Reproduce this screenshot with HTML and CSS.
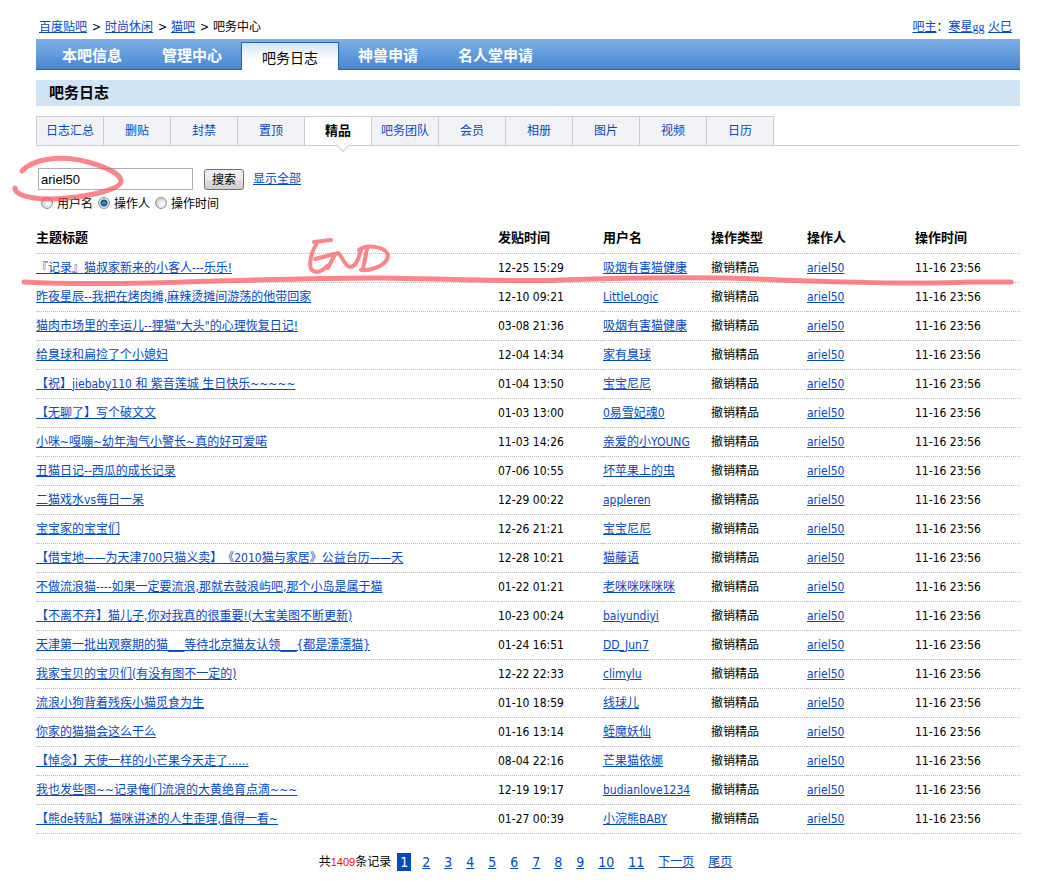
FILE: index.html
```html
<!DOCTYPE html>
<html lang="zh-CN">
  <head>
    <meta charset="UTF-8">
    <title>吧务中心_猫吧</title>
    <link rel="stylesheet" href="styles.css">
  </head>
  <body>
    <div class="top">
      <div class="crumbs">
        <a href="#">百度贴吧</a><span class="sep">&gt;</span><a href="#">时尚休闲</a><span class="sep">&gt;</span><a href="#">猫吧</a><span class="sep">&gt;</span><span>吧务中心</span>
      </div>
      <div class="owner"><a href="#">吧主</a>：<a href="#">寒星<span class="serif">gg</span></a> <a href="#">火巳</a></div>
    </div>

    <div class="nav">
      <a href="#">本吧信息</a>
      <a href="#">管理中心</a>
      <a href="#" class="on">吧务日志</a>
      <a href="#">神兽申请</a>
      <a href="#">名人堂申请</a>
    </div>

    <h1>吧务日志</h1>

    <div class="tabs">
      <a href="#">日志汇总</a>
      <a href="#">删贴</a>
      <a href="#">封禁</a>
      <a href="#">置顶</a>
      <a href="#" class="on">精品</a>
      <a href="#">吧务团队</a>
      <a href="#">会员</a>
      <a href="#">相册</a>
      <a href="#">图片</a>
      <a href="#">视频</a>
      <a href="#">日历</a>
    </div>

    <form class="search">
      <div class="line">
        <input type="text" class="word" value="ariel50" aria-label="搜索">
        <button type="button" class="btn">搜索</button>
        <a href="#">显示全部</a>
      </div>
      <div class="types">
        <input type="radio" name="type" id="t1"><label for="t1">用户名</label>
        <input type="radio" name="type" id="t2" checked><label for="t2">操作人</label>
        <input type="radio" name="type" id="t3"><label for="t3">操作时间</label>
      </div>
    </form>

    <table class="log">
      <colgroup>
        <col class="c-title"><col class="c-date"><col class="c-user"><col class="c-type"><col class="c-oper"><col class="c-time">
      </colgroup>
      <thead>
        <tr><th>主题标题</th><th>发贴时间</th><th>用户名</th><th>操作类型</th><th>操作人</th><th>操作时间</th></tr>
      </thead>
      <tbody>
        <tr><td><a href="#">『记录』猫叔家新来的小客人---乐乐!</a></td><td>12-25 15:29</td><td><a href="#">吸烟有害猫健康</a></td><td>撤销精品</td><td><a href="#">ariel50</a></td><td>11-16 23:56</td></tr>
        <tr><td><a href="#">昨夜星辰--我把在烤肉摊,麻辣烫摊间游荡的他带回家</a></td><td>12-10 09:21</td><td><a href="#">LittleLogic</a></td><td>撤销精品</td><td><a href="#">ariel50</a></td><td>11-16 23:56</td></tr>
        <tr><td><a href="#">猫肉市场里的幸运儿--狸猫"大头"的心理恢复日记!</a></td><td>03-08 21:36</td><td><a href="#">吸烟有害猫健康</a></td><td>撤销精品</td><td><a href="#">ariel50</a></td><td>11-16 23:56</td></tr>
        <tr><td><a href="#">给臭球和扁捡了个小媳妇</a></td><td>12-04 14:34</td><td><a href="#">家有臭球</a></td><td>撤销精品</td><td><a href="#">ariel50</a></td><td>11-16 23:56</td></tr>
        <tr><td><a href="#">【祝】jiebaby110 和 紫音莲城 生日快乐~~~~~</a></td><td>01-04 13:50</td><td><a href="#">宝宝尼尼</a></td><td>撤销精品</td><td><a href="#">ariel50</a></td><td>11-16 23:56</td></tr>
        <tr><td><a href="#">【无聊了】写个破文文</a></td><td>01-03 13:00</td><td><a href="#">0易雪妃魂0</a></td><td>撤销精品</td><td><a href="#">ariel50</a></td><td>11-16 23:56</td></tr>
        <tr><td><a href="#">小咪~嘎嘣~幼年淘气小警长~真的好可爱喏</a></td><td>11-03 14:26</td><td><a href="#">亲爱的小YOUNG</a></td><td>撤销精品</td><td><a href="#">ariel50</a></td><td>11-16 23:56</td></tr>
        <tr><td><a href="#">丑猫日记--西瓜的成长记录</a></td><td>07-06 10:55</td><td><a href="#">坏苹果上的虫</a></td><td>撤销精品</td><td><a href="#">ariel50</a></td><td>11-16 23:56</td></tr>
        <tr><td><a href="#">二猫戏水vs每日一呆</a></td><td>12-29 00:22</td><td><a href="#">appleren</a></td><td>撤销精品</td><td><a href="#">ariel50</a></td><td>11-16 23:56</td></tr>
        <tr><td><a href="#">宝宝家的宝宝们</a></td><td>12-26 21:21</td><td><a href="#">宝宝尼尼</a></td><td>撤销精品</td><td><a href="#">ariel50</a></td><td>11-16 23:56</td></tr>
        <tr><td><a href="#">【借宝地——为天津700只猫义卖】《2010猫与家居》公益台历——天</a></td><td>12-28 10:21</td><td><a href="#">猫藤语</a></td><td>撤销精品</td><td><a href="#">ariel50</a></td><td>11-16 23:56</td></tr>
        <tr><td><a href="#">不做流浪猫----如果一定要流浪,那就去鼓浪屿吧,那个小岛是属于猫</a></td><td>01-22 01:21</td><td><a href="#">老咪咪咪咪咪</a></td><td>撤销精品</td><td><a href="#">ariel50</a></td><td>11-16 23:56</td></tr>
        <tr><td><a href="#">【不离不弃】猫儿子,你对我真的很重要!(大宝美图不断更新)</a></td><td>10-23 00:24</td><td><a href="#">baiyundiyi</a></td><td>撤销精品</td><td><a href="#">ariel50</a></td><td>11-16 23:56</td></tr>
        <tr><td><a href="#">天津第一批出观察期的猫___等待北京猫友认领___{都是漂漂猫}</a></td><td>01-24 16:51</td><td><a href="#">DD_Jun7</a></td><td>撤销精品</td><td><a href="#">ariel50</a></td><td>11-16 23:56</td></tr>
        <tr><td><a href="#">我家宝贝的宝贝们(有没有图不一定的)</a></td><td>12-22 22:33</td><td><a href="#">climylu</a></td><td>撤销精品</td><td><a href="#">ariel50</a></td><td>11-16 23:56</td></tr>
        <tr><td><a href="#">流浪小狗背着残疾小猫觅食为生</a></td><td>01-10 18:59</td><td><a href="#">线球儿</a></td><td>撤销精品</td><td><a href="#">ariel50</a></td><td>11-16 23:56</td></tr>
        <tr><td><a href="#">你家的猫猫会这么干么</a></td><td>01-16 13:14</td><td><a href="#">蛭魔妖仙</a></td><td>撤销精品</td><td><a href="#">ariel50</a></td><td>11-16 23:56</td></tr>
        <tr><td><a href="#">【悼念】天使一样的小芒果今天走了......</a></td><td>08-04 22:16</td><td><a href="#">芒果猫依娜</a></td><td>撤销精品</td><td><a href="#">ariel50</a></td><td>11-16 23:56</td></tr>
        <tr><td><a href="#">我也发些图~~记录俺们流浪的大黄绝育点滴~~~</a></td><td>12-19 19:17</td><td><a href="#">budianlove1234</a></td><td>撤销精品</td><td><a href="#">ariel50</a></td><td>11-16 23:56</td></tr>
        <tr><td><a href="#">【熊de转贴】猫咪讲述的人生歪理,值得一看~</a></td><td>01-27 00:39</td><td><a href="#">小浣熊BABY</a></td><td>撤销精品</td><td><a href="#">ariel50</a></td><td>11-16 23:56</td></tr>
      </tbody>
    </table>

    <div class="pager">
      <span class="total">共<em>1409</em>条记录</span>
      <span class="cur">1</span>
      <a href="#">2</a>
      <a href="#">3</a>
      <a href="#">4</a>
      <a href="#">5</a>
      <a href="#">6</a>
      <a href="#">7</a>
      <a href="#">8</a>
      <a href="#">9</a>
      <a href="#">10</a>
      <a href="#">11</a>
      <a href="#" class="zh">下一页</a>
      <a href="#" class="zh">尾页</a>
    </div>

    <!-- red pen marks -->
    <svg class="marks" width="1040" height="300" viewBox="0 0 1040 300">
      <path d="M22 171C34 158 62 155 88 162C106 167 121 174 121 181C121 189 92 196 66 198C42 201 15 197 15 188"/>
      <path d="M24 282C60 284 100 284 150 283C220 281 300 278 380 278C450 279 530 282 560 280C620 278 700 276 780 280C850 283 930 284 970 282L1011 282"/>
      <path class="pen" d="M314 242L331 240M317 243C311 252 308 266 312 270C316 274 323 271 327 266M315 259L334 254M328 268C331 263 334 253 338 253C342 255 344 266 350 267C357 267 359 256 361 250M367 249L363 269M359 250C366 244 385 246 388 255C388 265 372 271 361 270"/>
    </svg>
  </body>
</html>
```
FILE: styles.css
```css
*{
  box-sizing: border-box;
}
body{
  position: relative;
  margin: 0;
  padding: 20px 20px 12px 36px;
  background: #fff;
  color: #000;
  font: 12px/14px "DejaVu Sans Condensed", "Noto Sans CJK SC", sans-serif;
  text-spacing-trim: space-all;
}
a{
  color: #0449be;
}

.top{
  display: flex;
  justify-content: space-between;
  padding: 0 8px 0 3px;
  margin-bottom: 5px;
}
.crumbs{
  display: flex;
  gap: 5px;
}
.sep{
  width: 8px;
  text-align: center;
}
.serif{
  font-family: "Liberation Serif", serif;
}

/* main nav */
.nav{
  display: flex;
  align-items: flex-end;
  height: 31px;
  padding-left: 6px;
  background: linear-gradient(#7fb0e7, #4788d0);
  border-bottom: 1px solid #2c62a2;
}
.nav a{
  padding: 0 20px;
  color: #fff;
  font-size: 15px;
  font-weight: bold;
  line-height: 26px;
  text-decoration: none;
}
.nav .on{
  height: 28px;
  margin: 0 -1px -1px;
  border: 1px solid #2c62a2;
  border-bottom: 0;
  background: linear-gradient(#d3e4f6, #fff 60%);
  color: #000;
  font-size: 14px;
  font-weight: normal;
  line-height: 30px;
}

h1{
  margin: 10px 0;
  padding-left: 13px;
  background: #d1e4f3;
  font-size: 15px;
  line-height: 26px;
}

/* sub tabs */
.tabs{
  display: flex;
  height: 30px;
  border-bottom: 1px solid #ccc;
}
.tabs a{
  position: relative;
  width: 67px;
  height: 30px;
  border: 1px solid #ccc;
  border-left: 0;
  background: #f0f2f5;
  line-height: 28px;
  text-align: center;
  text-decoration: none;
}
.tabs a:first-child{
  width: 68px;
  border-left: 1px solid #ccc;
}
.tabs .on{
  background: #fff;
  color: #000;
  font-size: 13px;
  font-weight: bold;
}
.tabs .on::after{
  content: "";
  position: absolute;
  left: 33px;
  bottom: -5px;
  width: 9px;
  height: 9px;
  border: 1px solid #ccc;
  border-width: 0 1px 1px 0;
  background: #fff;
  transform: rotate(45deg);
}

/* search */
.search{
  padding: 22px 0 0 2px;
}
.line{
  display: flex;
  align-items: center;
}
.word{
  width: 155px;
  height: 22px;
  margin: 0 11px 0 0;
  padding: 0 2px;
  border: 1px solid #abadb3;
  font: 13px "Liberation Sans", Arial, sans-serif;
}
.btn{
  width: 40px;
  height: 21px;
  margin-right: 9px;
  padding: 0;
  border: 1px solid #707070;
  border-radius: 3px;
  background: linear-gradient(#f3f3f3, #ebebeb 50%, #ddd 50%, #cfcfcf);
  font: 12px/18px "Noto Sans CJK SC", sans-serif;
}
.types{
  display: flex;
  align-items: center;
  height: 14px;
  margin: 7px 0 0 3px;
}
.types input{
  appearance: none;
  width: 12px;
  height: 12px;
  margin: 0 4px 3px 0;
  border: 1px solid #8e8f8f;
  border-radius: 50%;
  background: radial-gradient(circle at 60% 60%, #fff, #d0d3d6 70%);
}
.types input:checked{
  background: radial-gradient(circle, #3fb8ea 0, #164a7a 3px, #e4e8ea 4px);
}
.types label{
  margin-right: 5px;
}

/* log table */
.log{
  width: 100%;
  margin-top: 13px;
  border-collapse: collapse;
  table-layout: fixed;
}
.c-title{ width: 47%; }
.c-date{ width: 105px; }
.c-user{ width: 108px; }
.c-type{ width: 96px; }
.c-oper{ width: 108px; }
.c-time{ width: 105px; }
.log th,
.log td{
  height: 29px;
  padding: 0;
  border-bottom: 1px dotted #bbb;
  text-align: left;
  white-space: nowrap;
}
.log th{
  font-size: 13px;
}

.pager{
  display: flex;
  justify-content: center;
  margin-top: 19px;
  padding-left: 6px;
  font-size: 14px;
  line-height: 18px;
}
.pager a,
.cur{
  margin-right: 8px;
  padding: 0 3px;
}
.cur{
  background: #0449be;
  color: #fff;
}
.total{
  margin-right: 6px;
  font-size: 12px;
}
.total em{
  color: #f00;
  font: 11px "Liberation Sans", Arial, sans-serif;
}
.pager .zh{
  font-size: 12px;
}

.marks{
  position: absolute;
  top: 0;
  left: 0;
  pointer-events: none;
  fill: none;
  stroke: #f9545c;
  stroke-width: 5;
  stroke-linecap: round;
  stroke-linejoin: round;
  opacity: .7;
}
.pen{
  stroke-width: 4;
}
```
